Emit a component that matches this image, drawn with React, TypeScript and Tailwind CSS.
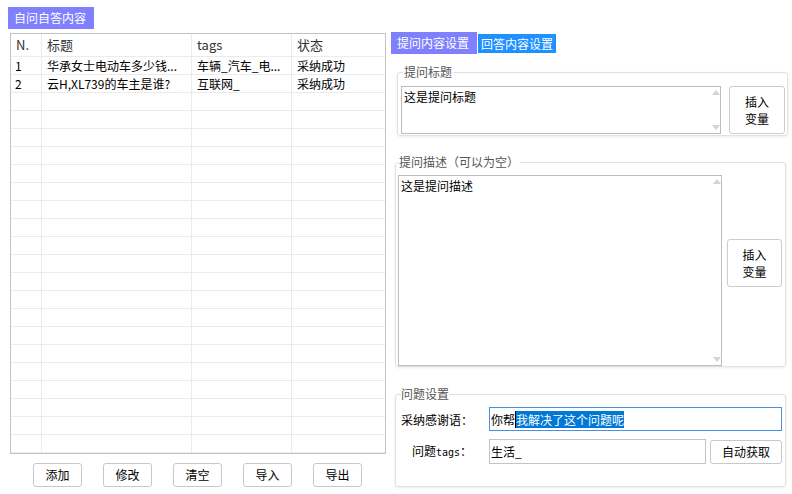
import React from "react";

const FONT = { fontFamily: '"Microsoft YaHei", "Noto Sans CJK SC", "Noto Sans", sans-serif' };

const rows: { n: string; title: string; tags: string; status: string }[] = [
  { n: "1", title: "华承女士电动车多少钱...", tags: "车辆_汽车_电...", status: "采纳成功" },
  { n: "2", title: "云H,XL739的车主是谁?", tags: "互联网_", status: "采纳成功" },
  ...Array.from({ length: 20 }, () => ({ n: "", title: "", tags: "", status: "" })),
];

function Arrows() {
  return (
    <div className="flex flex-col justify-between items-center w-[9px] py-[3px]">
      <svg width="8" height="5" viewBox="0 0 8 5">
        <path d="M4 0 L8 5 L0 5 Z" fill="#d4d4d4" />
      </svg>
      <svg width="8" height="5" viewBox="0 0 8 5">
        <path d="M0 0 L8 0 L4 5 Z" fill="#d4d4d4" />
      </svg>
    </div>
  );
}

function InsertBtn() {
  return (
    <div className="w-full h-full border border-[#cdcdcd] rounded-[3px] bg-white flex flex-col items-center justify-center text-[12px] leading-[17px] text-black">
      <span>插入</span>
      <span>变量</span>
    </div>
  );
}

export default function App() {
  return (
    <div style={FONT} className="w-[792px] h-[494px] bg-white flex overflow-hidden text-black">
      {/* Left column */}
      <div className="w-[386px] pl-[8px] pt-[7px] flex flex-col">
        <div className="w-[86px] h-[22px] bg-[#8080ff] text-white text-[12px] leading-[22px] pl-[6px]">
          自问自答内容
        </div>
        <div className="ml-[2px] mt-[4px] w-[376px] h-[421px] border border-[#c3c3c3] overflow-hidden">
          <div className="grid grid-cols-[31px_150px_100px_1fr]">
            {["N.", "标题", "tags", "状态"].map((h, i) => (
              <div
                key={h}
                className={`h-[23px] border-b border-[#ebebeb] text-[13px] leading-[22px] pl-[5px] text-[#333] ${i < 3 ? "border-r" : ""}`}
              >
                {h}
              </div>
            ))}
            {rows.map((r, idx) => (
              <React.Fragment key={idx}>
                <div className="h-[18px] border-b border-r border-[#ebebeb] text-[12px] leading-[17px] pl-[4px]">{r.n}</div>
                <div className="h-[18px] border-b border-r border-[#ebebeb] text-[12px] leading-[17px] pl-[5px] whitespace-nowrap">{r.title}</div>
                <div className="h-[18px] border-b border-r border-[#ebebeb] text-[12px] leading-[17px] pl-[5px] whitespace-nowrap">{r.tags}</div>
                <div className="h-[18px] border-b border-[#ebebeb] text-[12px] leading-[17px] pl-[5px]">{r.status}</div>
              </React.Fragment>
            ))}
          </div>
        </div>
        <div className="mt-[9px] pl-[25px] flex gap-[21px]">
          {["添加", "修改", "清空", "导入", "导出"].map((b) => (
            <div
              key={b}
              className="w-[49px] h-[24px] border border-[#c8c8c8] rounded-[3px] bg-white text-[12px] flex items-center justify-center"
            >
              {b}
            </div>
          ))}
        </div>
      </div>

      {/* Right column */}
      <div className="pl-[5px] pt-[32px] flex flex-col w-[406px]">
        <div className="flex items-start">
          <div className="w-[86px] h-[22px] bg-[#8080ff] text-white text-[12px] leading-[22px] pl-[6px]">提问内容设置</div>
          <div className="ml-[1px] mt-[2px] w-[78px] h-[19px] bg-[#1e90ff] text-white text-[12px] leading-[19px] pl-[3px]">回答内容设置</div>
        </div>

        {/* Group 1 */}
        <fieldset className="ml-[6px] mt-[10px] w-[391px] border border-[#e1e1e1] rounded-[3px] shadow-[0_1px_3px_rgba(0,0,0,0.08)] pl-[3px] pr-[2px] pt-[6px] pb-[1px] min-w-0">
          <legend className="ml-[2px] px-[1px] text-[12px] leading-[16px] text-[#555]">提问标题</legend>
          <div className="flex gap-[8px]">
            <div className="w-[320px] h-[48px] border border-[#bdbdbd] bg-white flex">
              <div className="flex-1 text-[12px] leading-[17px] pl-[2px] pt-[1px]">这是提问标题</div>
              <Arrows />
            </div>
            <div className="w-[56px] h-[48px]">
              <InsertBtn />
            </div>
          </div>
        </fieldset>

        {/* Group 2 */}
        <fieldset className="ml-[4px] mt-[18px] w-[391px] border border-[#e1e1e1] rounded-[3px] shadow-[0_1px_3px_rgba(0,0,0,0.08)] pl-[2px] pr-[2px] pt-[5px] pb-0 min-w-0">
          <legend className="px-[1px] text-[12px] leading-[16px] text-[#555]">提问描述（可以为空）</legend>
          <div className="flex gap-[5px] items-start">
            <div className="w-[324px] h-[191px] border border-[#bdbdbd] bg-white flex">
              <div className="flex-1 text-[12px] leading-[17px] pl-[2px] pt-[1px]">这是提问描述</div>
              <Arrows />
            </div>
            <div className="w-[55px] h-[48px] mt-[64px]">
              <InsertBtn />
            </div>
          </div>
        </fieldset>

        {/* Group 3 */}
        <fieldset className="ml-[4px] mt-[19px] w-[391px] border border-[#e1e1e1] rounded-[3px] shadow-[0_1px_3px_rgba(0,0,0,0.08)] pl-[5px] pr-[2px] pt-[5px] pb-[22px] min-w-0">
          <legend className="px-0 text-[12px] leading-[16px] text-[#555]">问题设置</legend>
          <div className="flex items-center">
            <div className="w-[88px] text-[12px] leading-[17px]">采纳感谢语：</div>
            <div className="w-[293px] h-[24px] border border-[#4a90e2] bg-white flex items-center pl-[1px] text-[12px] leading-[17px]">
              <span>你帮</span>
              <span className="w-[1px] h-[17px] bg-black" />
              <span className="bg-[#0078d7] text-white">我解决了这个问题呢</span>
            </div>
          </div>
          <div className="flex items-center mt-[8px]">
            <div className="w-[88px] pl-[11px] text-[12px] leading-[17px] flex items-baseline">
              <span>问题</span>
              <span className="text-[10px]" style={{ fontFamily: '"DejaVu Sans Mono", monospace' }}>tags</span>
              <span>：</span>
            </div>
            <div className="w-[217px] h-[25px] border border-[#c3c3c3] bg-white flex items-center pl-[1px] text-[12px]">
              生活_
            </div>
            <div className="ml-[4px] w-[72px] h-[24px] border border-[#c8c8c8] rounded-[3px] bg-white flex items-center justify-center text-[12px]">
              自动获取
            </div>
          </div>
        </fieldset>
      </div>
    </div>
  );
}
